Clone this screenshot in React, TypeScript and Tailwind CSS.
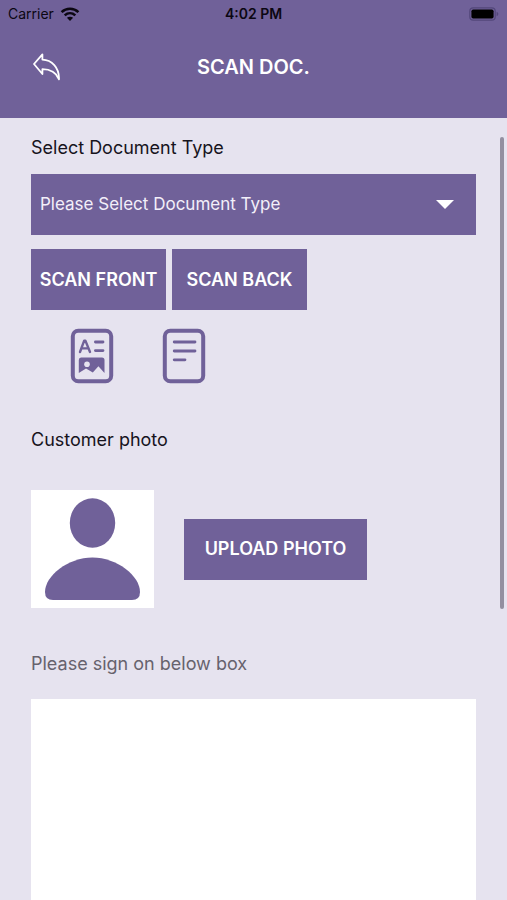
import type { ReactNode } from "react";

function WifiIcon() {
  return (
    <svg width="20" height="15" viewBox="0 0 20 15" fill="none" stroke="#0b0712" strokeWidth="2.6" aria-hidden="true">
      <path d="M1.6 5.1C6.4 .6 13.6 .6 18.4 5.1" />
      <path d="M4.7 8.4C7.8 5.6 12.2 5.6 15.3 8.4" />
      <path d="M10 14 6.9 10.8C8.7 9.3 11.3 9.3 13.1 10.8Z" fill="#0b0712" stroke="none" />
    </svg>
  );
}

function BatteryIcon() {
  return (
    <svg width="30" height="14" viewBox="0 0 30 14" aria-hidden="true">
      <rect x="0.8" y="0.8" width="25.4" height="12.4" rx="3.4" fill="none" stroke="#53477a" strokeWidth="1.2" />
      <rect x="2.4" y="2.4" width="22.2" height="9.2" rx="1.8" fill="#000" />
      <path d="M27.6 4.8C29.9 5.6 29.9 8.4 27.6 9.2Z" fill="#53477a" />
    </svg>
  );
}

function BackIcon() {
  return (
    <svg width="28" height="28" viewBox="0 0 28 28" fill="none" stroke="#fff" strokeWidth="1.8" strokeLinejoin="round" aria-hidden="true">
      <path d="M2 11 10.4 1.4V6.6C19.6 6.8 27.4 14.5 27 26.3C24.4 20 18.6 16.2 10.4 16.2V21Z" />
    </svg>
  );
}

function FrontIcon() {
  return (
    <svg width="44" height="56" viewBox="0 0 44 56" fill="none" stroke="#706199" strokeLinecap="round" strokeLinejoin="round" aria-label="Front side" role="img">
      <rect x="2.8" y="2.8" width="38.4" height="50.4" rx="5.5" strokeWidth="4" />
      <path d="M10 24 14.2 12.6H15.4L20 24M11.6 20.4H18.4" strokeWidth="2.4" />
      <path d="M25.4 14H33M25.4 22.6H33" strokeWidth="2.8" />
      <path d="M11 29.5H32Q34.5 29.5 34.5 32V45L28.4 38.2 22.8 44.6 16 40.4 8.8 45V32Q8.8 29.5 11 29.5Z" fill="#706199" stroke="none" />
      <circle cx="17" cy="36.2" r="2.8" fill="#e6e3ef" stroke="none" />
    </svg>
  );
}

function BackSideIcon() {
  return (
    <svg width="44" height="56" viewBox="0 0 44 56" fill="none" stroke="#706199" strokeLinecap="round" aria-label="Back side" role="img">
      <rect x="2.8" y="2.8" width="38.4" height="50.4" rx="5.5" strokeWidth="4" />
      <path d="M12.2 14H33M12.2 23H33M12.2 31.8H23" strokeWidth="2.8" />
    </svg>
  );
}

function PersonIcon() {
  return (
    <svg width="123" height="118" viewBox="0 0 123 118" fill="#706199" aria-label="No customer photo yet" role="img">
      <ellipse cx="61.5" cy="33" rx="22.7" ry="24.7" />
      <path d="M61.5 67.5C86 67.5 109 86 109 102Q109 110 101 110H22Q14 110 14 102C14 86 37 67.5 61.5 67.5Z" />
    </svg>
  );
}

function ActionButton({ children, className }: { children: ReactNode; className: string }) {
  return (
    <button type="button" className={`h-[61px] whitespace-nowrap bg-[#706199] text-lg font-semibold text-white ${className}`}>
      {children}
    </button>
  );
}

export default function App() {
  return (
    <div className="relative flex min-h-screen flex-col bg-[#e6e3ef] font-['Inter','Liberation_Sans',sans-serif] text-[#17141d]">
      <header className="bg-[#706199] pb-[37px]">
        <div className="grid grid-cols-3 items-center px-2 pt-1 text-sm leading-5 text-[#0b0712]">
          <div className="flex items-center gap-1.5">
            <span>Carrier</span>
            <WifiIcon />
          </div>
          <span className="text-center font-semibold">4:02 PM</span>
          <div className="flex justify-end">
            <BatteryIcon />
          </div>
        </div>
        <div className="mt-[29px] grid grid-cols-[28px_1fr_28px] items-center px-8">
          <button type="button" aria-label="Back">
            <BackIcon />
          </button>
          <h1 className="text-center text-xl font-semibold text-white">SCAN DOC.</h1>
        </div>
      </header>

      <main className="flex flex-1 flex-col px-[31px] pt-4">
        <label htmlFor="document-type" className="text-lg">
          Select Document Type
        </label>
        <div className="relative mt-3">
          <select
            id="document-type"
            defaultValue=""
            className="block h-[61px] w-full appearance-none bg-[#706199] px-[9px] text-[17px] text-[#f3eff9]"
          >
            <option value="">Please Select Document Type</option>
          </select>
          <svg className="pointer-events-none absolute top-[26px] right-[22px]" width="18" height="9" viewBox="0 0 18 9" fill="#fff" aria-hidden="true">
            <path d="M0 0H18L9 9Z" />
          </svg>
        </div>

        <div className="mt-3.5 flex gap-1.5">
          <ActionButton className="w-[135px]">SCAN FRONT</ActionButton>
          <ActionButton className="w-[135px]">SCAN BACK</ActionButton>
        </div>
        <div className="mt-[18px] flex gap-12 pl-[39px]">
          <FrontIcon />
          <BackSideIcon />
        </div>

        <h2 className="mt-[42px] text-lg">Customer photo</h2>
        <div className="mt-9 flex items-center gap-[30px]">
          <div className="bg-white">
            <PersonIcon />
          </div>
          <ActionButton className="w-[183px]">UPLOAD PHOTO</ActionButton>
        </div>

        <p id="signature-label" className="mt-[42px] text-lg text-[#66626d]">
          Please sign on below box
        </p>
        <div className="mt-[21px] flex min-h-[200px] flex-1 bg-white">
          <canvas aria-labelledby="signature-label" className="w-full" />
        </div>
      </main>

      <div className="absolute top-[137px] right-[3px] h-[472px] w-1 rounded-full bg-[#938fa0]" />
    </div>
  );
}
